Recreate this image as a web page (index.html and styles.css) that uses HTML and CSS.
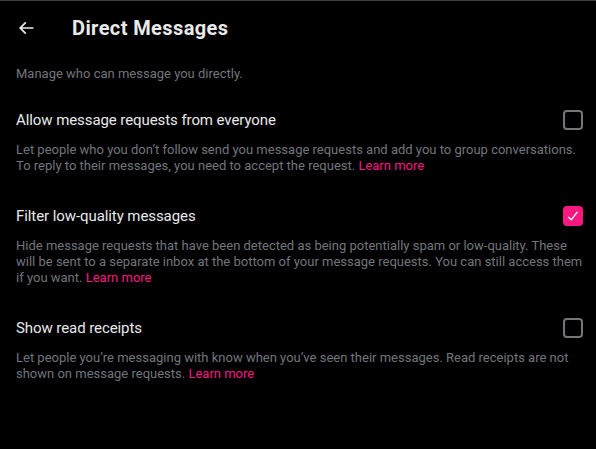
FILE: index.html
```html
<!DOCTYPE html>
<html lang="en">
<head>
<meta charset="utf-8">
<title>Direct Messages</title>
<link rel="stylesheet" href="styles.css">
</head>
<body>
<main class="page">
  <header class="header">
    <div class="back">
      <svg viewBox="0 0 24 24" width="20" height="20" aria-hidden="true"><path fill="#e7e9ea" d="M7.414 13l5.043 5.04-1.414 1.42L3.586 12l7.457-7.46 1.414 1.42L7.414 11H21v2H7.414z"/></svg>
    </div>
    <h1 class="title">Direct Messages</h1>
  </header>
  <p class="intro">Manage who can message you directly.</p>

  <section class="item">
    <div class="row">
      <span class="label">Allow message requests from everyone</span>
      <span class="box"></span>
    </div>
    <p class="desc">Let people who you don’t follow send you message requests and add you to group conversations. To reply to their messages, you need to accept the request. <a class="link" href="#">Learn more</a></p>
  </section>

  <section class="item">
    <div class="row">
      <span class="label">Filter low-quality messages</span>
      <span class="box checked">
        <svg viewBox="0 0 24 24" width="16" height="16" aria-hidden="true"><path fill="#fff" d="M9.64 18.952l-5.55-4.861 1.317-1.504 3.951 3.459 8.459-10.948L19.4 6.32 9.64 18.952z"/></svg>
      </span>
    </div>
    <p class="desc">Hide message requests that have been detected as being potentially spam or low-quality. These will be sent to a separate inbox at the bottom of your message requests. You can still access them if you want. <a class="link" href="#">Learn more</a></p>
  </section>

  <section class="item">
    <div class="row">
      <span class="label">Show read receipts</span>
      <span class="box"></span>
    </div>
    <p class="desc">Let people you’re messaging with know when you’ve seen their messages. Read receipts are not shown on message requests. <a class="link" href="#">Learn more</a></p>
  </section>
</main>
</body>
</html>
```

FILE: styles.css
```css
* { box-sizing: border-box; }
html, body {
  margin: 0;
  padding: 0;
  background: #000;
}
body {
  font-family: "Roboto", "Noto Sans", sans-serif;
  color: #e7e9ea;
  height: 449px;
  overflow: hidden;
}
.page {
  border-top: 1px solid #3a3d40;
  min-height: 449px;
}
.header {
  height: 53px;
  display: flex;
  align-items: center;
  padding: 0 16px;
}
.back {
  width: 36px;
  height: 36px;
  display: flex;
  align-items: center;
  margin-right: 20px;
}
.back svg { display: block; }
.title {
  margin: 0;
  font-size: 20px;
  font-weight: 700;
  line-height: 24px;
  letter-spacing: 0.4px;
}
.intro {
  margin: 0;
  padding: 12px 16px;
  font-size: 13px;
  line-height: 16px;
  color: #71767b;
}
.item {
  padding: 16px 13px 16px 16px;
}
.row {
  display: flex;
  align-items: center;
  justify-content: space-between;
  min-height: 20px;
}
.label {
  font-size: 15px;
  line-height: 20px;
  color: #e7e9ea;
  letter-spacing: -0.08px;
}
.box {
  width: 20px;
  height: 20px;
  border: 2px solid #71767b;
  border-radius: 4px;
  flex: none;
  display: flex;
  align-items: center;
  justify-content: center;
}
.box.checked {
  background: #f91880;
  border-color: #f91880;
}
.box svg { display: block; }
.desc {
  margin: 12px 0 0 0;
  font-size: 13px;
  line-height: 16px;
  color: #71767b;
}
.link {
  color: #f91880;
  text-decoration: none;
}
```
